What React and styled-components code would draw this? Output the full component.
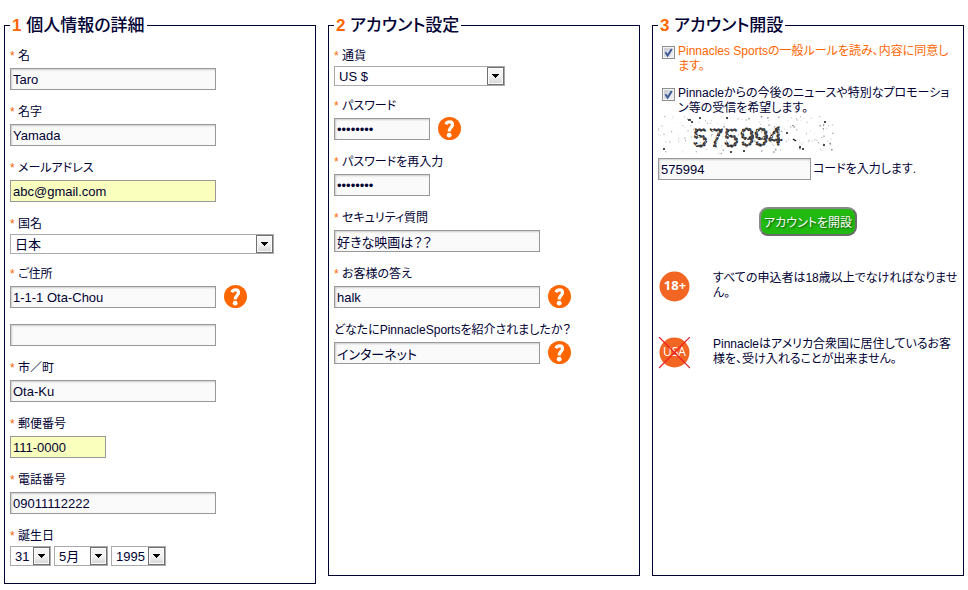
import React from "react";
import styled, { createGlobalStyle, css } from "styled-components";

const days = ["31"];
const months = ["5月"];
const years = ["1995"];

/* fixed seed so the speckles do not jump on every render */
const makeSpeckles = (count) => {
  let seed = 71;
  const next = () => {
    seed = (seed * 16807) % 2147483647;
    return seed / 2147483647;
  };
  return Array.from({ length: count }, () => ({
    x: next() * 175,
    y: next() * 38,
    r: 0.5 + next() * next() * 0.7,
    o: 0.08 + next() * next() * 0.7,
  }));
};

const speckles = makeSpeckles(190);

const App = () => {
  return (
    <>
      <GlobalStyle />
      <Form onSubmit={(e) => e.preventDefault()}>
        {/* 1 */}
        <Panel>
          <Legend>
            <Step>1</Step> 個人情報の詳細
          </Legend>
          <Fields>
            <TextField id="first" label="名" value="Taro" required />
            <TextField id="last" label="名字" value="Yamada" required />
            <TextField id="mail" label="メールアドレス" value="abc@gmail.com" required filled />
            <SelectField id="country" label="国名" options={["日本"]} size="country" />
            <TextField id="address" label="ご住所" value="1-1-1 Ota-Chou" required help />
            <ExtraLine>
              <Input aria-label="ご住所 2" defaultValue="" />
            </ExtraLine>
            <TextField id="city" label="市／町" value="Ota-Ku" required />
            <TextField id="zip" label="郵便番号" value="111-0000" required filled short />
            <TextField id="phone" label="電話番号" value="09011112222" required />
            <Field $select>
              <Label htmlFor="day">
                <Star>*</Star> 誕生日
              </Label>
              <DateRow>
                <Dropdown id="day" options={days} size="day" />
                <Dropdown label="月" options={months} size="month" />
                <Dropdown label="年" options={years} size="year" />
              </DateRow>
            </Field>
          </Fields>
        </Panel>

        {/* 2 */}
        <Panel>
          <Legend>
            <Step>2</Step> アカウント設定
          </Legend>
          <Fields>
            <SelectField id="currency" label="通貨" options={["US $"]} size="currency" />
            <TextField id="pass" label="パスワード" value="password" type="password" required short help />
            <TextField id="pass2" label="パスワードを再入力" value="password" type="password" required short />
            <TextField id="question" label="セキュリティ質問" value="好きな映画は？？" required />
            <TextField id="answer" label="お客様の答え" value="halk" required help />
            <TextField
              id="referrer"
              label="どなたにPinnacleSportsを紹介されましたか？"
              value="インターネット"
              help
            />
          </Fields>
        </Panel>

        {/* 3 */}
        <Panel>
          <Legend>
            <Step>3</Step> アカウント開設
          </Legend>
          <OpenAccount>
            <CheckRow $accent>
              <Tick />
              Pinnacles Sportsの一般ルールを読み、内容に同意します。
            </CheckRow>
            <CheckRow>
              <Tick />
              Pinnacleからの今後のニュースや特別なプロモーション等の受信を希望します。
            </CheckRow>
            <Captcha />
            <CodeRow>
              <Input id="code" $size="code" defaultValue="575994" />
              <CodeLabel htmlFor="code">コードを入力します.</CodeLabel>
            </CodeRow>
            <Submit type="submit">アカウントを開設</Submit>
            <Notice>
              <AdultIcon />
              <NoticeText>すべての申込者は18歳以上でなければなりません。</NoticeText>
            </Notice>
            <Notice>
              <NoUsaIcon />
              <NoticeText>
                Pinnacleはアメリカ合衆国に居住しているお客様を、受け入れることが出来ません。
              </NoticeText>
            </Notice>
          </OpenAccount>
        </Panel>
      </Form>
    </>
  );
};

export default App;

/* ============= PARTS ================= */

const TextField = ({ id, label, value, type = "text", required, filled, short, help }) => (
  <Field>
    <Label htmlFor={id}>
      {required && <Star>*</Star>} {label}
    </Label>
    <InputRow>
      <Input id={id} type={type} defaultValue={value} $filled={filled} $size={short ? "short" : "full"} />
      {help && (
        <HelpButton type="button" aria-label="ヘルプ">
          <HelpIcon />
        </HelpButton>
      )}
    </InputRow>
  </Field>
);

const SelectField = ({ id, label, options, size }) => (
  <Field $select>
    <Label htmlFor={id}>
      <Star>*</Star> {label}
    </Label>
    <Dropdown id={id} options={options} size={size} />
  </Field>
);

const Dropdown = ({ id, label, options, size }) => (
  <SelectBox $size={size}>
    <Select id={id} aria-label={label}>
      {options.map((o) => (
        <option key={o}>{o}</option>
      ))}
    </Select>
    <Arrow>
      <svg width="7" height="4" viewBox="0 0 7 4" shapeRendering="crispEdges">
        <path d="M0 0H7V1H6V2H5V3H4V4H3V3H2V2H1V1H0Z" fill="#000" />
      </svg>
    </Arrow>
  </SelectBox>
);

const Tick = () => (
  <TickBox>
    <Checkbox type="checkbox" defaultChecked />
    <TickMark viewBox="0 0 13 13">
      <path d="M3.4 6.3L5.6 9.6L9.8 3" fill="none" stroke="#3f5a96" strokeWidth="2" />
    </TickMark>
  </TickBox>
);

const HelpIcon = () => (
  <svg width="23" height="23" viewBox="0 0 23 23">
    <circle cx="11.5" cy="11.5" r="11.5" fill="#ff6600" />
    <path
      d="M7.8 7.2C8.8 5.4 10.2 4.9 11.6 4.9C13.6 4.9 14.5 6 14.5 7.6C14.5 10.3 11.2 10.6 11.2 14.6"
      fill="none"
      stroke="#fff"
      strokeWidth="3.2"
    />
    <circle cx="11.2" cy="18.2" r="2.4" fill="#fff" />
  </svg>
);

const AdultIcon = () => (
  <svg width="32" height="32" viewBox="0 0 32 32">
    <circle cx="16.5" cy="15.5" r="15" fill="#f26522" />
    <BadgeText x="17" y="19" $bold>
      18+
    </BadgeText>
  </svg>
);

const NoUsaIcon = () => (
  <svg width="32" height="32" viewBox="0 0 32 32">
    <circle cx="16.5" cy="15.5" r="15" fill="#f26522" />
    <BadgeText x="16.5" y="19">
      USA
    </BadgeText>
    <path d="M1 0L32 31M32 0L1 31" stroke="#ee1c25" strokeWidth="1.2" />
  </svg>
);

const Captcha = () => (
  <CaptchaSvg width="176" height="39" viewBox="0 0 176 39" role="img" aria-label="575994">
    {speckles.map((s, i) => (
      <circle key={i} cx={s.x} cy={s.y} r={s.r} fill="#000" opacity={s.o} />
    ))}
    <path
      d="M30 4h3M33 6h2M41 2h2M68 2h2M166 6h2M128 17h2M135 23l3 2M141 31h2M144 33h2M165 29h2M5 33h2M72 36h2M85 35h2"
      stroke="#111"
      strokeWidth="1.4"
    />
    <CaptchaText x="35 51 66 82 96 110" y="31 31 31 30 30 29" rotate="0 0 0 0 0 0">
      575994
    </CaptchaText>
    <path
      d="M37 19l5 2M46 24l3 4M54 14l3 2M60 20l-3 3M58 26l3 1M69 19l3 3M74 27l4-2M84 16l4 3M91 20l-3 4M99 14l3 5M106 21l-2 4M113 21l4-3M121 14v4M38 29l4-1M71 13l5-1M88 28l4-2"
      stroke="#fff"
      strokeWidth="1"
      strokeDasharray="2 1"
    />
  </CaptchaSvg>
);

/* ============= STYLES ================= */

const GlobalStyle = createGlobalStyle`
  * {
    box-sizing: border-box;
  }

  body {
    margin: 0;
    background: #fff;
    color: #000033;
    font-family: "Liberation Sans", "Noto Sans CJK JP", sans-serif;
    font-size: 12px;
    font-feature-settings: "palt";
  }

  input, select, button {
    font-family: inherit;
    font-feature-settings: inherit;
    color: inherit;
    margin: 0;
  }
`;

const Form = styled.form`
  display: grid;
  grid-template-columns: repeat(3, minmax(0, 1fr));
  align-items: start;
  gap: 12px;
  padding: 12px 4px 6px;

  @media (max-width: 820px) {
    grid-template-columns: 1fr;
  }
`;

const Panel = styled.fieldset`
  min-width: 0;
  min-height: 564px;
  margin: 0;
  padding: 0 5px 17px;
  border: 1px solid #000033;
`;

const Legend = styled.legend`
  padding: 2px 2px 0;
  font-size: 17px;
  font-weight: 500;
  line-height: 24px;
`;

const Step = styled.span`
  color: #ff6600;
  font-weight: 700;
`;

const Fields = styled.div`
  display: flex;
  flex-direction: column;
  padding-top: 10px;
`;

const Field = styled.div`
  margin-bottom: ${(p) => (p.$select ? "12px" : "14px")};

  &:last-child {
    margin-bottom: 0;
  }
`;

const ExtraLine = styled.div`
  display: flex;
  margin: 2px 0 14px;
`;

const Label = styled.label`
  display: block;
  line-height: 16px;
`;

const Star = styled.span`
  color: #ff6600;
`;

const InputRow = styled.div`
  display: flex;
  align-items: flex-end;
  gap: 8px;
  height: 22px;
  margin-top: 4px;
`;

const inputWidths = { full: "206px", short: "96px", code: "153px" };

const Input = styled.input`
  width: ${(p) => inputWidths[p.$size || "full"]};
  height: 22px;
  padding: 0 2px;
  border: 1px solid #999;
  border-radius: 0;
  background: #fafafa;
  box-shadow: inset 1px 1px 2px #ccc;
  font-size: 13px;

  ${(p) =>
    p.$filled &&
    css`
      background: #faffbd;
      box-shadow: none;
    `}
`;

const HelpButton = styled.button`
  display: flex;
  padding: 0;
  border: 0;
  background: none;
  cursor: pointer;
`;

const selectWidths = {
  country: "264px",
  currency: "171px",
  day: "41px",
  month: "54px",
  year: "55px",
};

const SelectBox = styled.div`
  position: relative;
  width: ${(p) => selectWidths[p.$size]};
  height: 20px;
  margin-top: 2px;
`;

const Select = styled.select`
  appearance: none;
  display: block;
  width: 100%;
  height: 20px;
  padding: 0 18px 0 4px;
  border: 1px solid #aaa;
  border-radius: 0;
  background: #fff;
  font-size: 13px;
`;

const Arrow = styled.span`
  position: absolute;
  top: 1px;
  right: 1px;
  bottom: 1px;
  width: 17px;
  display: flex;
  align-items: center;
  justify-content: center;
  border: 1px solid #707070;
  background: linear-gradient(#f4f4f4 50%, #d4d4d4);
  box-shadow: inset 0 0 0 1px #fafafa;
  pointer-events: none;
`;

const DateRow = styled.div`
  display: flex;
  gap: 3px;
`;

const OpenAccount = styled.div`
  display: flex;
  flex-direction: column;
  padding-top: 6px;
`;

const CheckRow = styled.label`
  display: block;
  padding-left: 20px;
  line-height: 15px;
  color: ${(p) => (p.$accent ? "#ff6600" : "inherit")};

  & + & {
    margin-top: 12px;
  }
`;

const TickBox = styled.span`
  position: relative;
  float: left;
  width: 13px;
  height: 13px;
  margin: 2px 0 0 -16px;
`;

const Checkbox = styled.input`
  appearance: none;
  display: block;
  width: 13px;
  height: 13px;
  border: 1px solid #8e8f8f;
  background: linear-gradient(135deg, #c3c8ce, #f4f5f6);
  box-shadow: inset 0 0 0 1px #f4f4f4;
`;

const TickMark = styled.svg`
  position: absolute;
  inset: 0;
  pointer-events: none;

  input:not(:checked) + & {
    display: none;
  }
`;

const CaptchaSvg = styled.svg`
  display: block;
`;

const CaptchaText = styled.text`
  font-family: "Liberation Sans", sans-serif;
  font-size: 26px;
  fill: #555;
  stroke: #111;
  stroke-width: 1;
  stroke-dasharray: 2 2;
`;

const CodeRow = styled.div`
  display: flex;
  align-items: center;
  gap: 2px;
  margin-top: 3px;
`;

const CodeLabel = styled.label`
  line-height: 16px;
`;

const Submit = styled.button`
  align-self: center;
  height: 29px;
  margin: 27px 0 1px;
  padding: 0 3px;
  border: 2px solid #6b6b6b;
  border-top-color: #8a8a8a;
  border-left-color: #8a8a8a;
  border-radius: 9px;
  background: #22b911;
  color: #fff;
  font-size: 12px;
  text-shadow: 1px 1px 2px #064d00;
  cursor: pointer;
`;

const Notice = styled.div`
  display: grid;
  grid-template-columns: 32px 1fr;
  gap: 23px;
  margin-top: 34px;
`;

const NoticeText = styled.p`
  margin: 0;
  line-height: 15px;
`;

const BadgeText = styled.text`
  font-family: "Open Sans", sans-serif;
  font-size: ${(p) => (p.$bold ? "13px" : "12px")};
  font-weight: ${(p) => (p.$bold ? 700 : 400)};
  fill: #fff;
  text-anchor: middle;
`;
